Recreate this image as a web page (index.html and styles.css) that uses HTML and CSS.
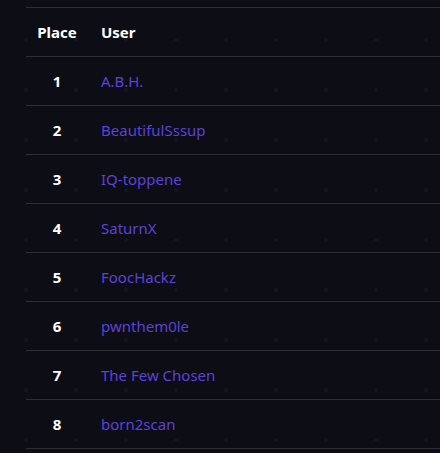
FILE: index.html
```html
<!DOCTYPE html>
<html>
<head>
<meta charset="utf-8">
<link rel="stylesheet" href="styles.css">
</head>
<body>
<div class="page">
  <table class="board">
    <thead>
      <tr><th class="place">Place</th><th class="user">User</th></tr>
    </thead>
    <tbody>
      <tr><td class="place">1</td><td class="user"><a>A.B.H.</a></td></tr>
      <tr><td class="place">2</td><td class="user"><a>BeautifulSssup</a></td></tr>
      <tr><td class="place">3</td><td class="user"><a>IQ-toppene</a></td></tr>
      <tr><td class="place">4</td><td class="user"><a>SaturnX</a></td></tr>
      <tr><td class="place">5</td><td class="user"><a>FoocHackz</a></td></tr>
      <tr><td class="place">6</td><td class="user"><a>pwnthem0le</a></td></tr>
      <tr><td class="place">7</td><td class="user"><a>The Few Chosen</a></td></tr>
      <tr><td class="place">8</td><td class="user"><a>born2scan</a></td></tr>
    </tbody>
  </table>
</div>
</body>
</html>
```
FILE: styles.css
```css
html, body {
  margin: 0;
  padding: 0;
  height: 100%;
}
body {
  background-color: #0d0d16;
  background-image: radial-gradient(circle, rgba(60,60,80,0.18) 0 1.5px, transparent 2.5px);
  background-size: 50px 50px;
  background-position: 1px 15px;
  font-family: "Noto Sans", "Open Sans", sans-serif;
  font-size: 15px;
  overflow: hidden;
}
.page {
  padding: 7px 0 0 26px;
}
.board {
  border-collapse: collapse;
  width: 100%;
  border-top: 1px solid #2e2e38;
}
.board th, .board td {
  height: 48px;
  padding: 0;
  border-bottom: 1px solid #2e2e38;
  vertical-align: middle;
}
.board th {
  color: #ffffff;
  font-weight: 700;
  text-align: left;
}
.board .place {
  width: 62px;
  text-align: center;
  color: #ffffff;
  font-weight: 700;
}
.board .user {
  padding-left: 13px;
  text-align: left;
}
.board a {
  color: #5c42d8;
  text-decoration: none;
}
```
